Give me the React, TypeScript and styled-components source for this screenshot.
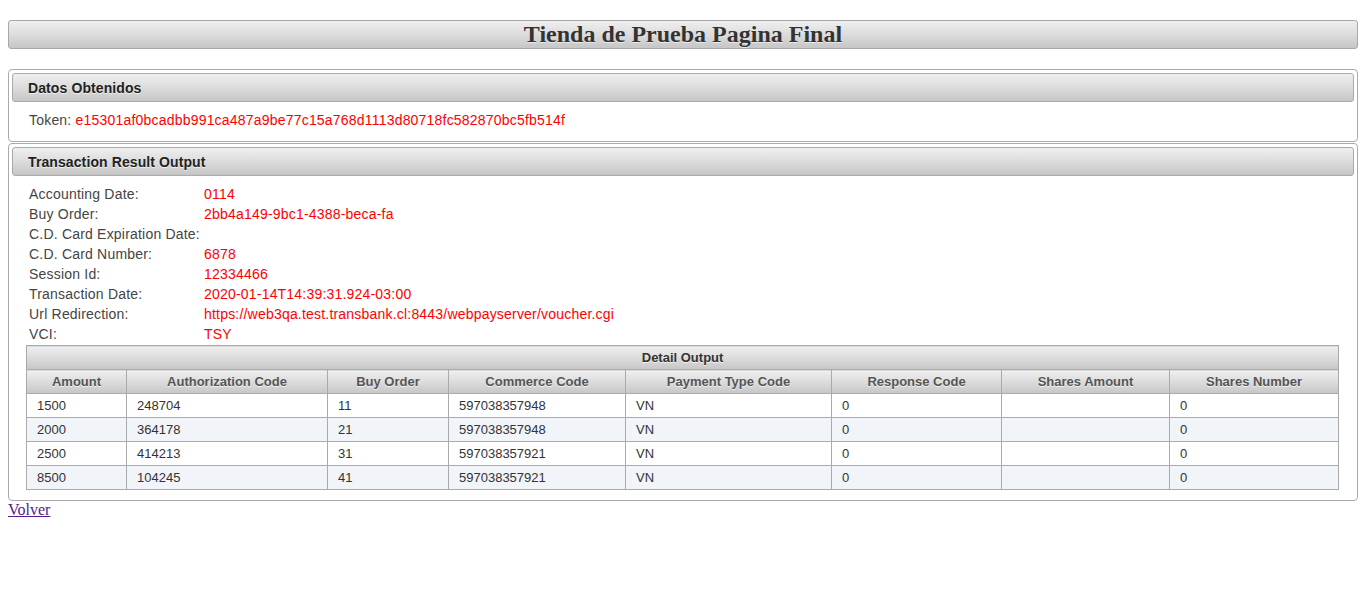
import React, { FC } from "react";
import styled, { createGlobalStyle } from "styled-components";

const GlobalStyle = createGlobalStyle`
  body {
    margin: 8px;
    background: #fff;
    font-family: "Liberation Serif", "Times New Roman", serif;
  }
`;

const headerGradient = "linear-gradient(to bottom, #efefef 0%, #dcdcdc 50%, #c6c6c6 100%)";

const TitleBar = styled.div`
  margin-top: 12px;
  height: 27px;
  border: 1px solid #a8a8a8;
  border-radius: 3px;
  background: ${headerGradient};
  display: flex;
  align-items: center;
  justify-content: center;
  font-family: "Liberation Serif", "Times New Roman", serif;
  font-weight: bold;
  font-size: 24px;
  color: #333;
  text-shadow: 0 1px 0 rgba(255, 255, 255, 0.6);
`;

const Panel = styled.div<{ $gap: number }>`
  margin-top: ${({ $gap }) => $gap}px;
  border: 1px solid #aaa;
  border-radius: 4px;
  padding: 3px;
  font-family: "Liberation Sans", Arial, sans-serif;
  font-size: 14px;
  color: #333;
`;

const PanelHeader = styled.div`
  height: 27px;
  border: 1px solid #aaa;
  border-radius: 3px;
  background: ${headerGradient};
  display: flex;
  align-items: center;
  padding-left: 15px;
  font-weight: bold;
  font-size: 14px;
  letter-spacing: 0.1px;
  color: #222;
  text-shadow: 0 1px 0 rgba(255, 255, 255, 0.7);
`;

const PanelBody = styled.div<{ $bottom: number }>`
  padding: 8px 16px ${({ $bottom }) => $bottom}px 14px;
`;

const InfoGrid = styled.div<{ $labelWidth: string }>`
  display: grid;
  grid-template-columns: ${({ $labelWidth }) => $labelWidth} 1fr;
  padding-left: 3px;
  line-height: 20px;
  letter-spacing: 0.2px;
`;

const Label = styled.span`
  color: #444;
`;

const Value = styled.span`
  color: #f00;
`;

const DetailTable = styled.table`
  width: 100%;
  margin-top: 1px;
  border-collapse: collapse;
  font-family: "Liberation Sans", Arial, sans-serif;
  font-size: 13px;
  color: #333;
  table-layout: fixed;
`;

const CaptionCell = styled.th`
  height: 23px;
  padding: 0;
  border: 1px solid #aaa;
  background: ${headerGradient};
  font-weight: bold;
  color: #333;
  text-align: center;
  text-shadow: 0 1px 0 rgba(255, 255, 255, 0.7);
`;

const HeadCell = styled.th`
  height: 23px;
  padding: 0;
  border: 1px solid #aaa;
  background: ${headerGradient};
  font-weight: bold;
  color: #555;
  text-align: center;
  text-shadow: 0 1px 0 rgba(255, 255, 255, 0.7);
`;

const Row = styled.tr<{ $alt: boolean }>`
  background: ${({ $alt }) => ($alt ? "#f1f4f9" : "#fff")};
`;

const Cell = styled.td`
  height: 23px;
  padding: 0 0 0 10px;
  border: 1px solid #aaa;
  color: #333;
`;

const BackLink = styled.a`
  font-family: "Liberation Serif", "Times New Roman", serif;
  font-size: 16px;
  color: #551a8b;
`;

const info: [string, string][] = [
  ["Accounting Date:", "0114"],
  ["Buy Order:", "2bb4a149-9bc1-4388-beca-fa"],
  ["C.D. Card Expiration Date:", ""],
  ["C.D. Card Number:", "6878"],
  ["Session Id:", "12334466"],
  ["Transaction Date:", "2020-01-14T14:39:31.924-03:00"],
  ["Url Redirection:", "https://web3qa.test.transbank.cl:8443/webpayserver/voucher.cgi"],
  ["VCI:", "TSY"],
];

const columns = [
  { title: "Amount", width: 100 },
  { title: "Authorization Code", width: 201 },
  { title: "Buy Order", width: 121 },
  { title: "Commerce Code", width: 177 },
  { title: "Payment Type Code", width: 206 },
  { title: "Response Code", width: 170 },
  { title: "Shares Amount", width: 168 },
  { title: "Shares Number", width: 169 },
];

const details = [
  ["1500", "248704", "11", "597038357948", "VN", "0", "", "0"],
  ["2000", "364178", "21", "597038357948", "VN", "0", "", "0"],
  ["2500", "414213", "31", "597038357921", "VN", "0", "", "0"],
  ["8500", "104245", "41", "597038357921", "VN", "0", "", "0"],
];

const App: FC = () => {
  return (
    <>
      <GlobalStyle />
      <TitleBar>Tienda de Prueba Pagina Final</TitleBar>

      <Panel $gap={20}>
        <PanelHeader>Datos Obtenidos</PanelHeader>
        <PanelBody $bottom={8}>
          <InfoGrid $labelWidth="auto">
            <Label>Token:&nbsp;</Label>
            <Value>e15301af0bcadbb991ca487a9be77c15a768d1113d80718fc582870bc5fb514f</Value>
          </InfoGrid>
        </PanelBody>
      </Panel>

      <Panel $gap={1}>
        <PanelHeader>Transaction Result Output</PanelHeader>
        <PanelBody $bottom={7}>
          <InfoGrid $labelWidth="175px">
            {info.map(([label, value]) => (
              <React.Fragment key={label}>
                <Label>{label}</Label>
                <Value>{value}</Value>
              </React.Fragment>
            ))}
          </InfoGrid>
          <DetailTable>
            <colgroup>
              {columns.map((c) => (
                <col key={c.title} style={{ width: c.width }} />
              ))}
            </colgroup>
            <thead>
              <tr>
                <CaptionCell colSpan={columns.length}>Detail Output</CaptionCell>
              </tr>
              <tr>
                {columns.map((c) => (
                  <HeadCell key={c.title}>{c.title}</HeadCell>
                ))}
              </tr>
            </thead>
            <tbody>
              {details.map((row, i) => (
                <Row key={i} $alt={i % 2 === 1}>
                  {row.map((v, j) => (
                    <Cell key={j}>{v}</Cell>
                  ))}
                </Row>
              ))}
            </tbody>
          </DetailTable>
        </PanelBody>
      </Panel>
      <BackLink href="#">Volver</BackLink>
    </>
  );
};

export default App;
